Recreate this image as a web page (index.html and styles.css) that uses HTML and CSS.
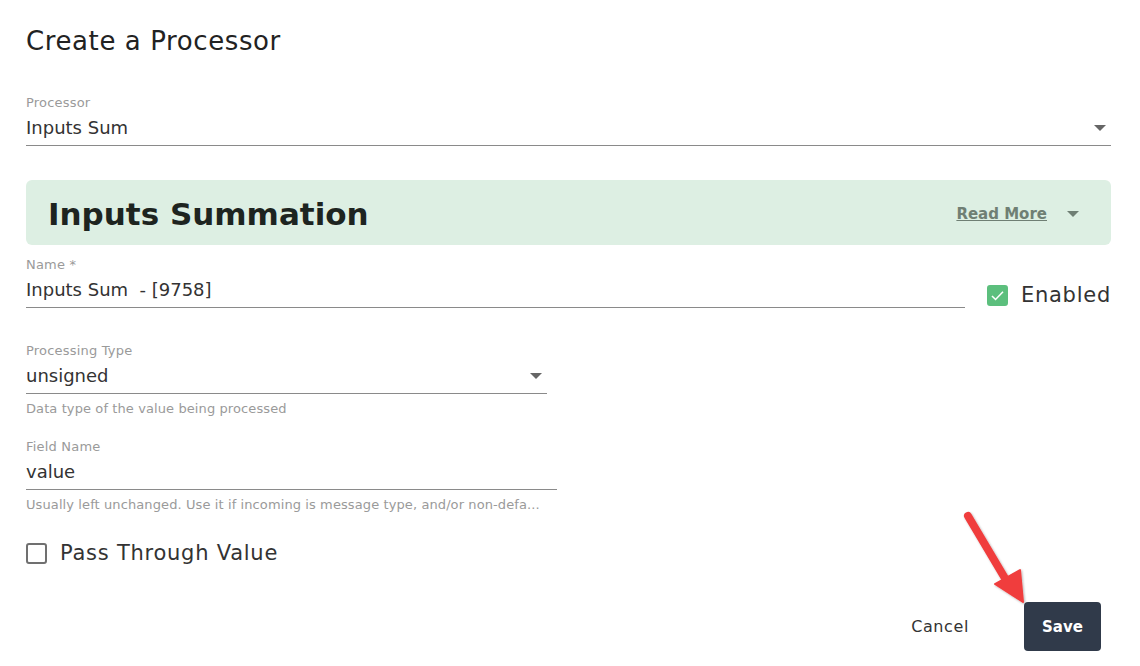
FILE: index.html
```html
<!DOCTYPE html>
<html lang="en">
<head>
    <meta charset="UTF-8">
    <meta name="viewport" content="width=device-width, initial-scale=1.0">
    <title>Create a Processor</title>
    <link rel="stylesheet" href="styles.css">
</head>
<body>
    <div class="dialog">
        <h1 class="dialog-title">Create a Processor</h1>

        <div class="field">
            <label class="field-label">Processor</label>
            <div class="field-input select">
                <span>Inputs Sum</span>
                <span class="caret"></span>
            </div>
        </div>

        <div class="info-banner">
            <h2>Inputs Summation</h2>
            <div class="read-more">
                <a href="#">Read More</a>
                <span class="caret"></span>
            </div>
        </div>

        <div class="name-row">
            <div class="field name-field">
                <label class="field-label">Name *</label>
                <div class="field-input">Inputs Sum&nbsp; - [9758]</div>
            </div>
            <label class="check">
                <span class="check-box checked">
                    <svg viewBox="0 0 20 20" width="17" height="17"><path d="M3.5 10.5l4.2 4.2L16.5 5.5" fill="none" stroke="#fff" stroke-width="1.8"/></svg>
                </span>
                <span class="check-text">Enabled</span>
            </label>
        </div>

        <div class="field type-field">
            <label class="field-label">Processing Type</label>
            <div class="field-input select">
                <span>unsigned</span>
                <span class="caret"></span>
            </div>
            <div class="field-help">Data type of the value being processed</div>
        </div>

        <div class="field fieldname-field">
            <label class="field-label">Field Name</label>
            <div class="field-input">value</div>
            <div class="field-help">Usually left unchanged. Use it if incoming is message type, and/or non-defa...</div>
        </div>

        <label class="check pass-through">
            <span class="check-box"></span>
            <span class="check-text">Pass Through Value</span>
        </label>

        <div class="actions">
            <button class="btn btn-text">Cancel</button>
            <button class="btn btn-primary">Save</button>
        </div>

        <!-- annotation arrow pointing at the save button -->
        <svg class="pointer" width="80" height="110" viewBox="0 0 80 110">
            <defs>
                <filter id="shade" x="-20%" y="-20%" width="140%" height="140%">
                    <feDropShadow dx="1" dy="1" stdDeviation="1.2" flood-color="#000" flood-opacity="0.3"/>
                </filter>
            </defs>
            <g filter="url(#shade)" fill="#f03e3e" stroke="#f03e3e">
                <line x1="10" y1="8" x2="48" y2="72" stroke-width="8" stroke-linecap="round"/>
                <polygon points="37,76 62,62 65,94" stroke-width="2" stroke-linejoin="round"/>
            </g>
        </svg>
    </div>
</body>
</html>
```

FILE: styles.css
```css
* {
    box-sizing: border-box;
    margin: 0;
    padding: 0;
}

body {
    font-family: 'DejaVu Sans', 'Noto Sans', sans-serif;
    background: #ffffff;
    color: #333333;
}

.dialog {
    position: relative;
    width: 1140px;
    padding: 25px 29px 0 26px;
}

.dialog-title {
    font-size: 26px;
    font-weight: 400;
    line-height: 32px;
    color: #222222;
    letter-spacing: 0.6px;
}

.field {
    margin-top: 38px;
}

.field-label {
    display: block;
    font-size: 13px;
    line-height: 16px;
    color: #9a9a9a;
    letter-spacing: 0.2px;
}

.field-input {
    display: flex;
    align-items: center;
    justify-content: space-between;
    margin-top: 5px;
    padding-bottom: 5px;
    height: 30px;
    font-size: 18px;
    line-height: 24px;
    color: #333333;
    border-bottom: 1px solid #8a8a8a;
}

.caret {
    width: 0;
    height: 0;
    margin-right: 5px;
    border-left: 6px solid transparent;
    border-right: 6px solid transparent;
    border-top: 6px solid #666666;
}

.info-banner {
    display: flex;
    align-items: center;
    justify-content: space-between;
    margin-top: 34px;
    height: 65px;
    padding: 2px 32px 0 22px;
    background: #ddefe3;
    border-radius: 6px;
}

.info-banner h2 {
    font-size: 31px;
    font-weight: 700;
    color: #1d2420;
}

.read-more {
    display: flex;
    align-items: center;
    gap: 21px;
}

.read-more a {
    font-size: 15px;
    font-weight: 700;
    color: #6f7f74;
    margin-right: -1px;
}

.read-more .caret {
    margin-right: 0;
    border-top-color: #6f7f74;
}

.name-row {
    display: flex;
    align-items: flex-end;
    gap: 22px;
}

.name-row .field {
    margin-top: 12px;
}

.name-field {
    width: 939px;
}

.check {
    display: flex;
    align-items: center;
    gap: 13px;
    cursor: pointer;
}

.name-row .check {
    margin-bottom: 1px;
    height: 24px;
}

.check-box {
    display: flex;
    align-items: center;
    justify-content: center;
    width: 21px;
    height: 21px;
    border: 2px solid #707070;
    border-radius: 3px;
}

.check-box.checked {
    background: #5cbf7d;
    border-color: #5cbf7d;
}

.check-text {
    font-size: 21px;
    color: #333333;
    letter-spacing: 0.75px;
}

.type-field {
    width: 521px;
    margin-top: 35px;
}

.fieldname-field {
    width: 531px;
    margin-top: 22px;
}

.field-help {
    margin-top: 7px;
    font-size: 13px;
    line-height: 16px;
    color: #9a9a9a;
    letter-spacing: 0.1px;
    white-space: nowrap;
}

.pass-through {
    margin-top: 28px;
    height: 24px;
}

.actions {
    display: flex;
    justify-content: flex-end;
    align-items: center;
    gap: 55px;
    margin-top: 37px;
    padding-right: 10px;
}

.btn {
    font-family: inherit;
    font-size: 15px;
    border: none;
    cursor: pointer;
}

.btn-text {
    background: none;
    color: #333333;
    font-size: 16px;
    letter-spacing: 0.6px;
}

.btn-primary {
    width: 77px;
    height: 49px;
    background: #303a4a;
    color: #ffffff;
    font-weight: 700;
    border-radius: 4px;
}

.pointer {
    position: absolute;
    left: 958px;
    top: 508px;
}
```
